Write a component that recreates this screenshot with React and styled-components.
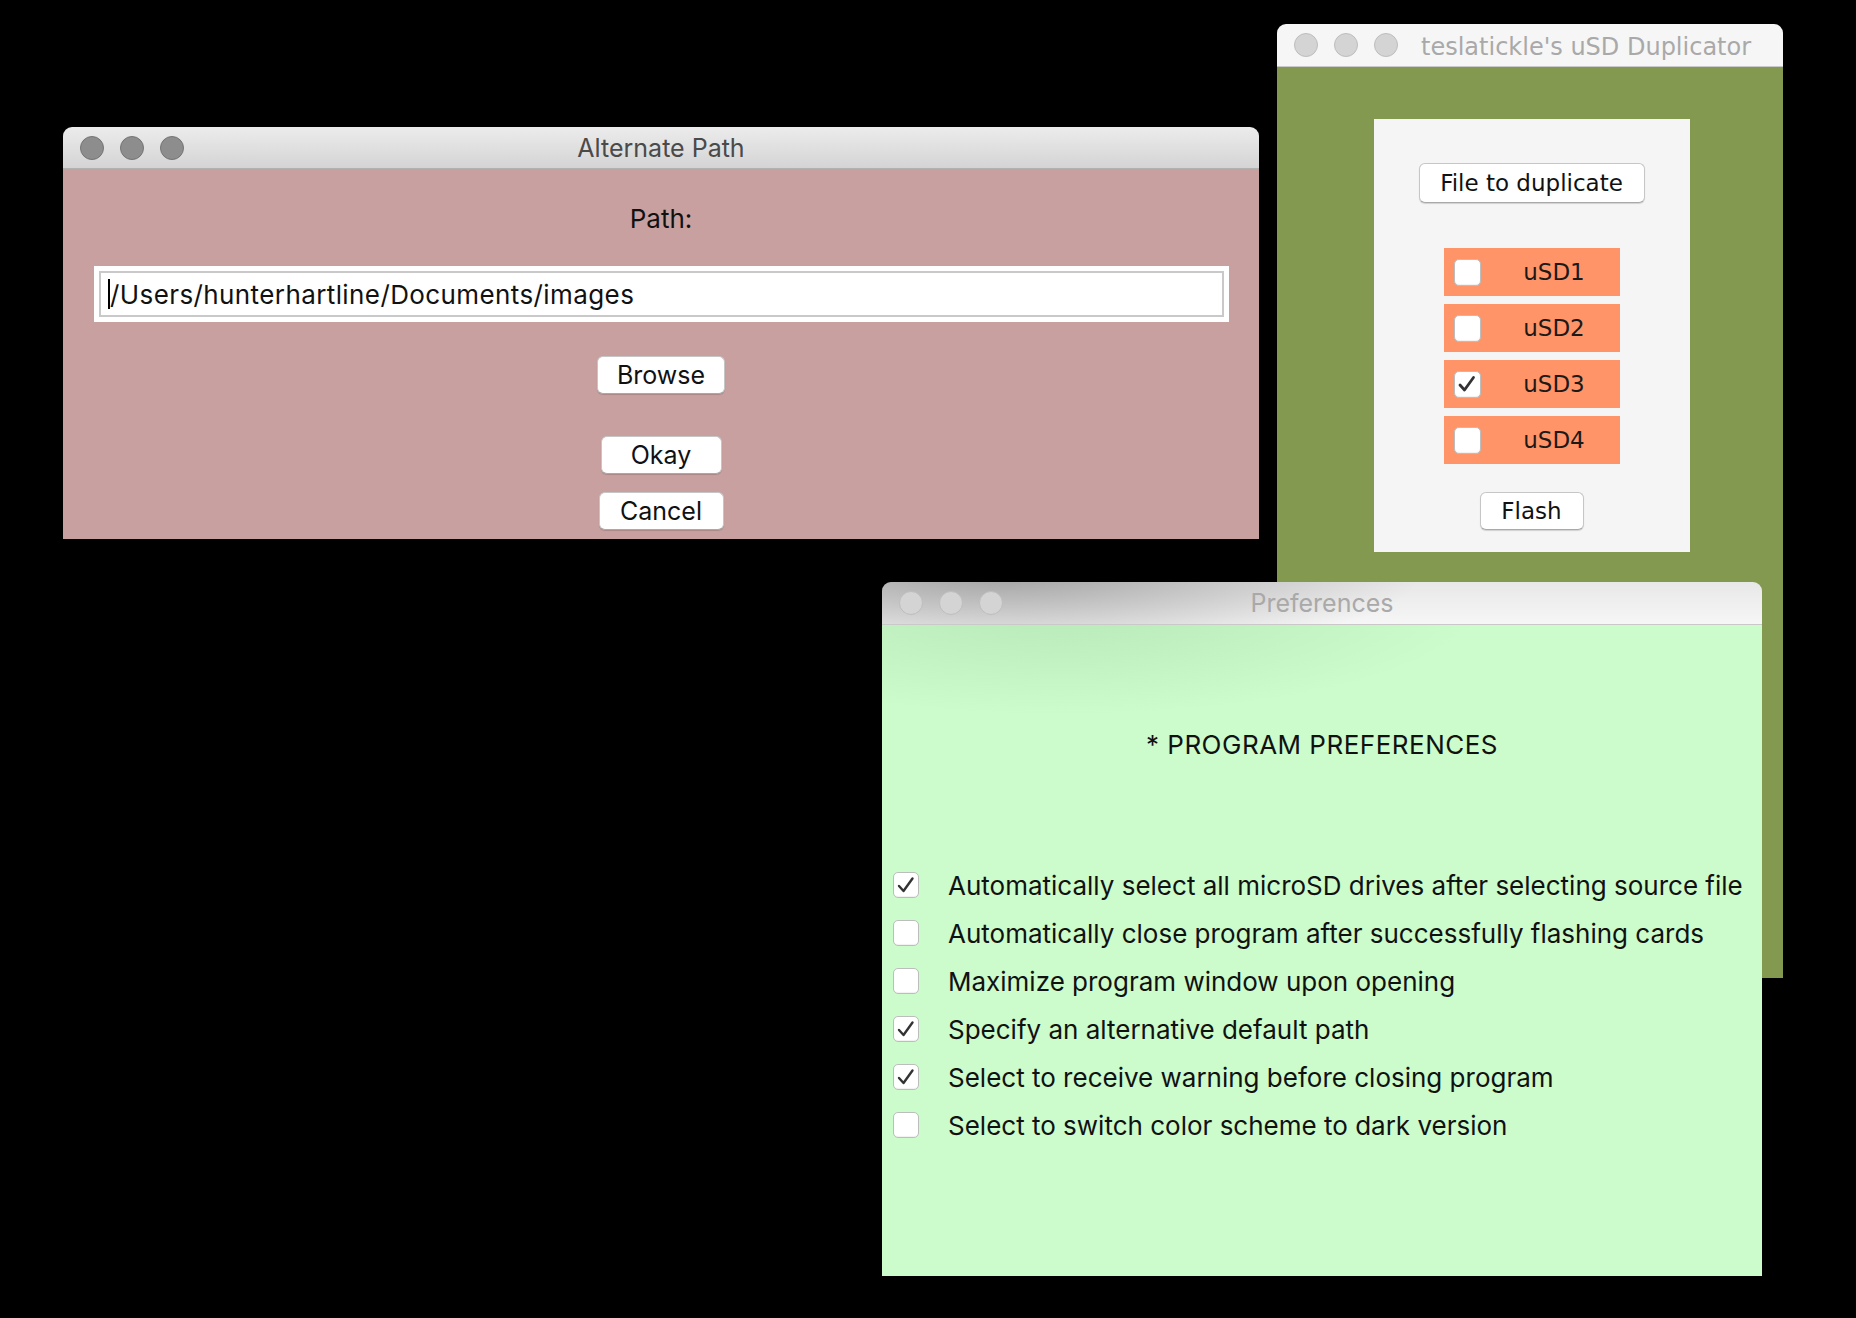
import React from 'react';
import styled, { createGlobalStyle, css } from 'styled-components';

const SF = `"Inter", "Liberation Sans", sans-serif`;
const LUCIDA = `"DejaVu Sans", "Liberation Sans", sans-serif`;

const GlobalStyle = createGlobalStyle`
    html, body {
        margin: 0;
        padding: 0;
        background: #000;
    }
    #root {
        width: 1856px;
        height: 1318px;
        overflow: hidden;
    }
`;

// 데스크탑 (창들이 놓이는 캔버스)
const Desktop = styled.div`
    position: relative;
    width: 1856px;
    height: 1318px;
    background: #000;
`;

const Window = styled.section`
    position: absolute;
    left: ${(p) => p.$x}px;
    top: ${(p) => p.$y}px;
    width: ${(p) => p.$w}px;
    height: ${(p) => p.$h}px;
    display: flex;
    flex-direction: column;
    border-radius: 9px 9px 0 0;
    overflow: hidden;
    z-index: ${(p) => p.$z || 1};
`;

const TitleBar = styled.header`
    flex: 0 0 ${(p) => p.$height || 42}px;
    display: grid;
    grid-template-columns: ${(p) => (p.$centered ? '1fr auto 1fr' : 'auto 1fr')};
    align-items: center;
    padding: 0 17px;
    border-bottom: 1px solid ${(p) => (p.$active ? '#b1b1b1' : '#c9c9c9')};
    box-sizing: border-box;
    ${(p) =>
        p.$active
            ? css`
                  background: linear-gradient(#ececec, #d4d4d4);
              `
            : css`
                  background: #f6f6f6;
              `}
    ${(p) =>
        p.$shaded &&
        css`
            background: radial-gradient(ellipse 420px 90px at 120px -10px, rgba(0, 0, 0, 0.3), rgba(0, 0, 0, 0) 100%),
                linear-gradient(rgba(0, 0, 0, 0.06), rgba(0, 0, 0, 0)), #f6f6f6;
        `}
`;

const Lights = styled.div`
    display: flex;
    gap: 16px;
`;

const Light = styled.span`
    width: 24px;
    height: 24px;
    border-radius: 50%;
    box-sizing: border-box;
    background: ${(p) => (p.$active ? '#8d8d8d' : '#d4d4d4')};
    border: 1px solid ${(p) => (p.$active ? '#747474' : '#bdbdbd')};
`;

const Title = styled.h1`
    margin: 0;
    font-weight: 400;
    font-family: ${(p) => p.$font || SF};
    font-size: ${(p) => p.$size || 25}px;
    color: ${(p) => (p.$active ? '#4a4a4a' : '#a9a9a9')};
    white-space: nowrap;
    padding-left: ${(p) => p.$offset || 0}px;
    padding-top: ${(p) => p.$drop || 0}px;
`;

const WindowBody = styled.div`
    flex: 1;
    display: flex;
    flex-direction: column;
    align-items: center;
    background: ${(p) => p.$bg};
`;

// 버튼 (맥 기본 버튼)
const MacButton = styled.button`
    font-family: ${(p) => p.$font || SF};
    font-size: ${(p) => p.$size || 25}px;
    color: #111;
    background: #fff;
    border: 1px solid #c6c6c6;
    border-bottom-color: #a9a9a9;
    border-radius: 6px;
    box-shadow: 0 1px 1px rgba(0, 0, 0, 0.15);
    width: ${(p) => p.$w}px;
    height: ${(p) => p.$h || 38}px;
    margin-top: ${(p) => p.$mt || 0}px;
    padding: 0;
    line-height: 1;
`;

/* ---------- Alternate Path ---------- */

const PathLabel = styled.div`
    font-family: ${SF};
    font-size: 26px;
    line-height: 30px;
    color: #111;
    margin-top: 35px;
`;

const PathFrame = styled.div`
    align-self: stretch;
    margin: 32px 30px 0 31px;
    padding: 5px;
    background: #fff;
`;

const PathInput = styled.div`
    height: 46px;
    box-sizing: border-box;
    border: 2px solid #c9c9c9;
    display: flex;
    align-items: center;
    padding-left: 7px;
    font-family: ${SF};
    font-size: 26px;
    letter-spacing: 0.4px;
    color: #111;
    white-space: nowrap;

    .caret {
        width: 2px;
        height: 30px;
        background: #000;
    }
`;

/* ---------- uSD Duplicator ---------- */

const DupPanel = styled.div`
    margin-top: 52px;
    width: 316px;
    height: 433px;
    background: #f5f5f5;
    display: flex;
    flex-direction: column;
    align-items: center;
    padding-top: 44px;
    box-sizing: border-box;
    margin-left: 3px;
`;

const DriveList = styled.div`
    display: flex;
    flex-direction: column;
    gap: 8px;
    margin-top: 45px;
`;

const DriveRow = styled.label`
    width: 176px;
    height: 48px;
    background: #ff9468;
    display: flex;
    align-items: center;
    padding-left: 10px;
    box-sizing: border-box;
`;

const DriveName = styled.span`
    flex: 1;
    text-align: center;
    font-family: ${LUCIDA};
    font-size: 23px;
    color: #1a1a1a;
    padding-left: 8px;
`;

const CheckBox = styled.span`
    flex: 0 0 ${(p) => p.$size || 27}px;
    height: ${(p) => p.$size || 27}px;
    box-sizing: border-box;
    border-radius: 5px;
    background: #fff;
    border: 1px solid #bdbdbd;
    box-shadow: inset 0 -1px 1px rgba(0, 0, 0, 0.06);
    display: flex;
    align-items: center;
    justify-content: center;
`;

/* ---------- Preferences ---------- */

const PrefBody = styled(WindowBody)`
    align-items: stretch;
    background: radial-gradient(ellipse 420px 110px at 180px -20px, rgba(60, 120, 60, 0.14), rgba(0, 0, 0, 0) 100%),
        #ccfbcc;
`;

const PrefHeading = styled.h2`
    margin: 105px 0 0;
    text-align: center;
    font-family: ${SF};
    font-weight: 400;
    font-size: 26px;
    line-height: 30px;
    letter-spacing: 0.5px;
    color: #111;
`;

const PrefList = styled.div`
    margin-top: 101px;
    padding-left: 11px;
    display: flex;
    flex-direction: column;
`;

const PrefRow = styled.label`
    height: 48px;
    display: flex;
    align-items: center;
    gap: 29px;
    font-family: ${SF};
    font-size: 26px;
    color: #111;
    white-space: nowrap;
`;

const Check = ({ weight = 2.8 }) => (
    <svg width="20" height="20" viewBox="0 0 20 20">
        <polyline points="3,11 7.5,16 16.5,3.5" fill="none" stroke="#333" strokeWidth={weight} strokeLinecap="round" strokeLinejoin="round" />
    </svg>
);

const drives = [
    { name: 'uSD1', checked: false },
    { name: 'uSD2', checked: false },
    { name: 'uSD3', checked: true },
    { name: 'uSD4', checked: false },
];

const prefs = [
    { text: 'Automatically select all microSD drives after selecting source file', checked: true },
    { text: 'Automatically close program after successfully flashing cards', checked: false },
    { text: 'Maximize program window upon opening', checked: false },
    { text: 'Specify an alternative default path', checked: true },
    { text: 'Select to receive warning before closing program', checked: true },
    { text: 'Select to switch color scheme to dark version', checked: false },
];

const TrafficLights = ({ active }) => (
    <Lights>
        <Light $active={active} />
        <Light $active={active} />
        <Light $active={active} />
    </Lights>
);

const App = () => (
    <Desktop>
        <GlobalStyle />

        <Window $x={63} $y={127} $w={1196} $h={412}>
            <TitleBar $active $centered>
                <TrafficLights active />
                <Title $active>Alternate Path</Title>
                <span />
            </TitleBar>
            <WindowBody $bg="#c8a09f">
                <PathLabel>Path:</PathLabel>
                <PathFrame>
                    <PathInput>
                        <span className="caret" />
                        /Users/hunterhartline/Documents/images
                    </PathInput>
                </PathFrame>
                <MacButton $w={128} $mt={34}>Browse</MacButton>
                <MacButton $w={121} $mt={42}>Okay</MacButton>
                <MacButton $w={125} $mt={18}>Cancel</MacButton>
            </WindowBody>
        </Window>

        <Window $x={1277} $y={24} $w={506} $h={954}>
            <TitleBar $height={43}>
                <TrafficLights />
                <Title $font={LUCIDA} $size={24} $offset={23} $drop={4}>teslatickle's uSD Duplicator</Title>
            </TitleBar>
            <WindowBody $bg="#83994f">
                <DupPanel>
                    <MacButton $font={LUCIDA} $size={23} $w={226} $h={40}>File to duplicate</MacButton>
                    <DriveList>
                        {drives.map((d) => (
                            <DriveRow key={d.name}>
                                <CheckBox>{d.checked && <Check />}</CheckBox>
                                <DriveName>{d.name}</DriveName>
                            </DriveRow>
                        ))}
                    </DriveList>
                    <MacButton $font={LUCIDA} $size={23} $w={104} $mt={28}>Flash</MacButton>
                </DupPanel>
            </WindowBody>
        </Window>

        <Window $x={882} $y={582} $w={880} $h={694} $z={2}>
            <TitleBar $height={43} $centered $shaded>
                <TrafficLights />
                <Title>Preferences</Title>
                <span />
            </TitleBar>
            <PrefBody>
                <PrefHeading>* PROGRAM PREFERENCES</PrefHeading>
                <PrefList>
                    {prefs.map((p) => (
                        <PrefRow key={p.text}>
                            <CheckBox $size={26}>{p.checked && <Check weight={2.4} />}</CheckBox>
                            {p.text}
                        </PrefRow>
                    ))}
                </PrefList>
            </PrefBody>
        </Window>
    </Desktop>
);

export default App;
